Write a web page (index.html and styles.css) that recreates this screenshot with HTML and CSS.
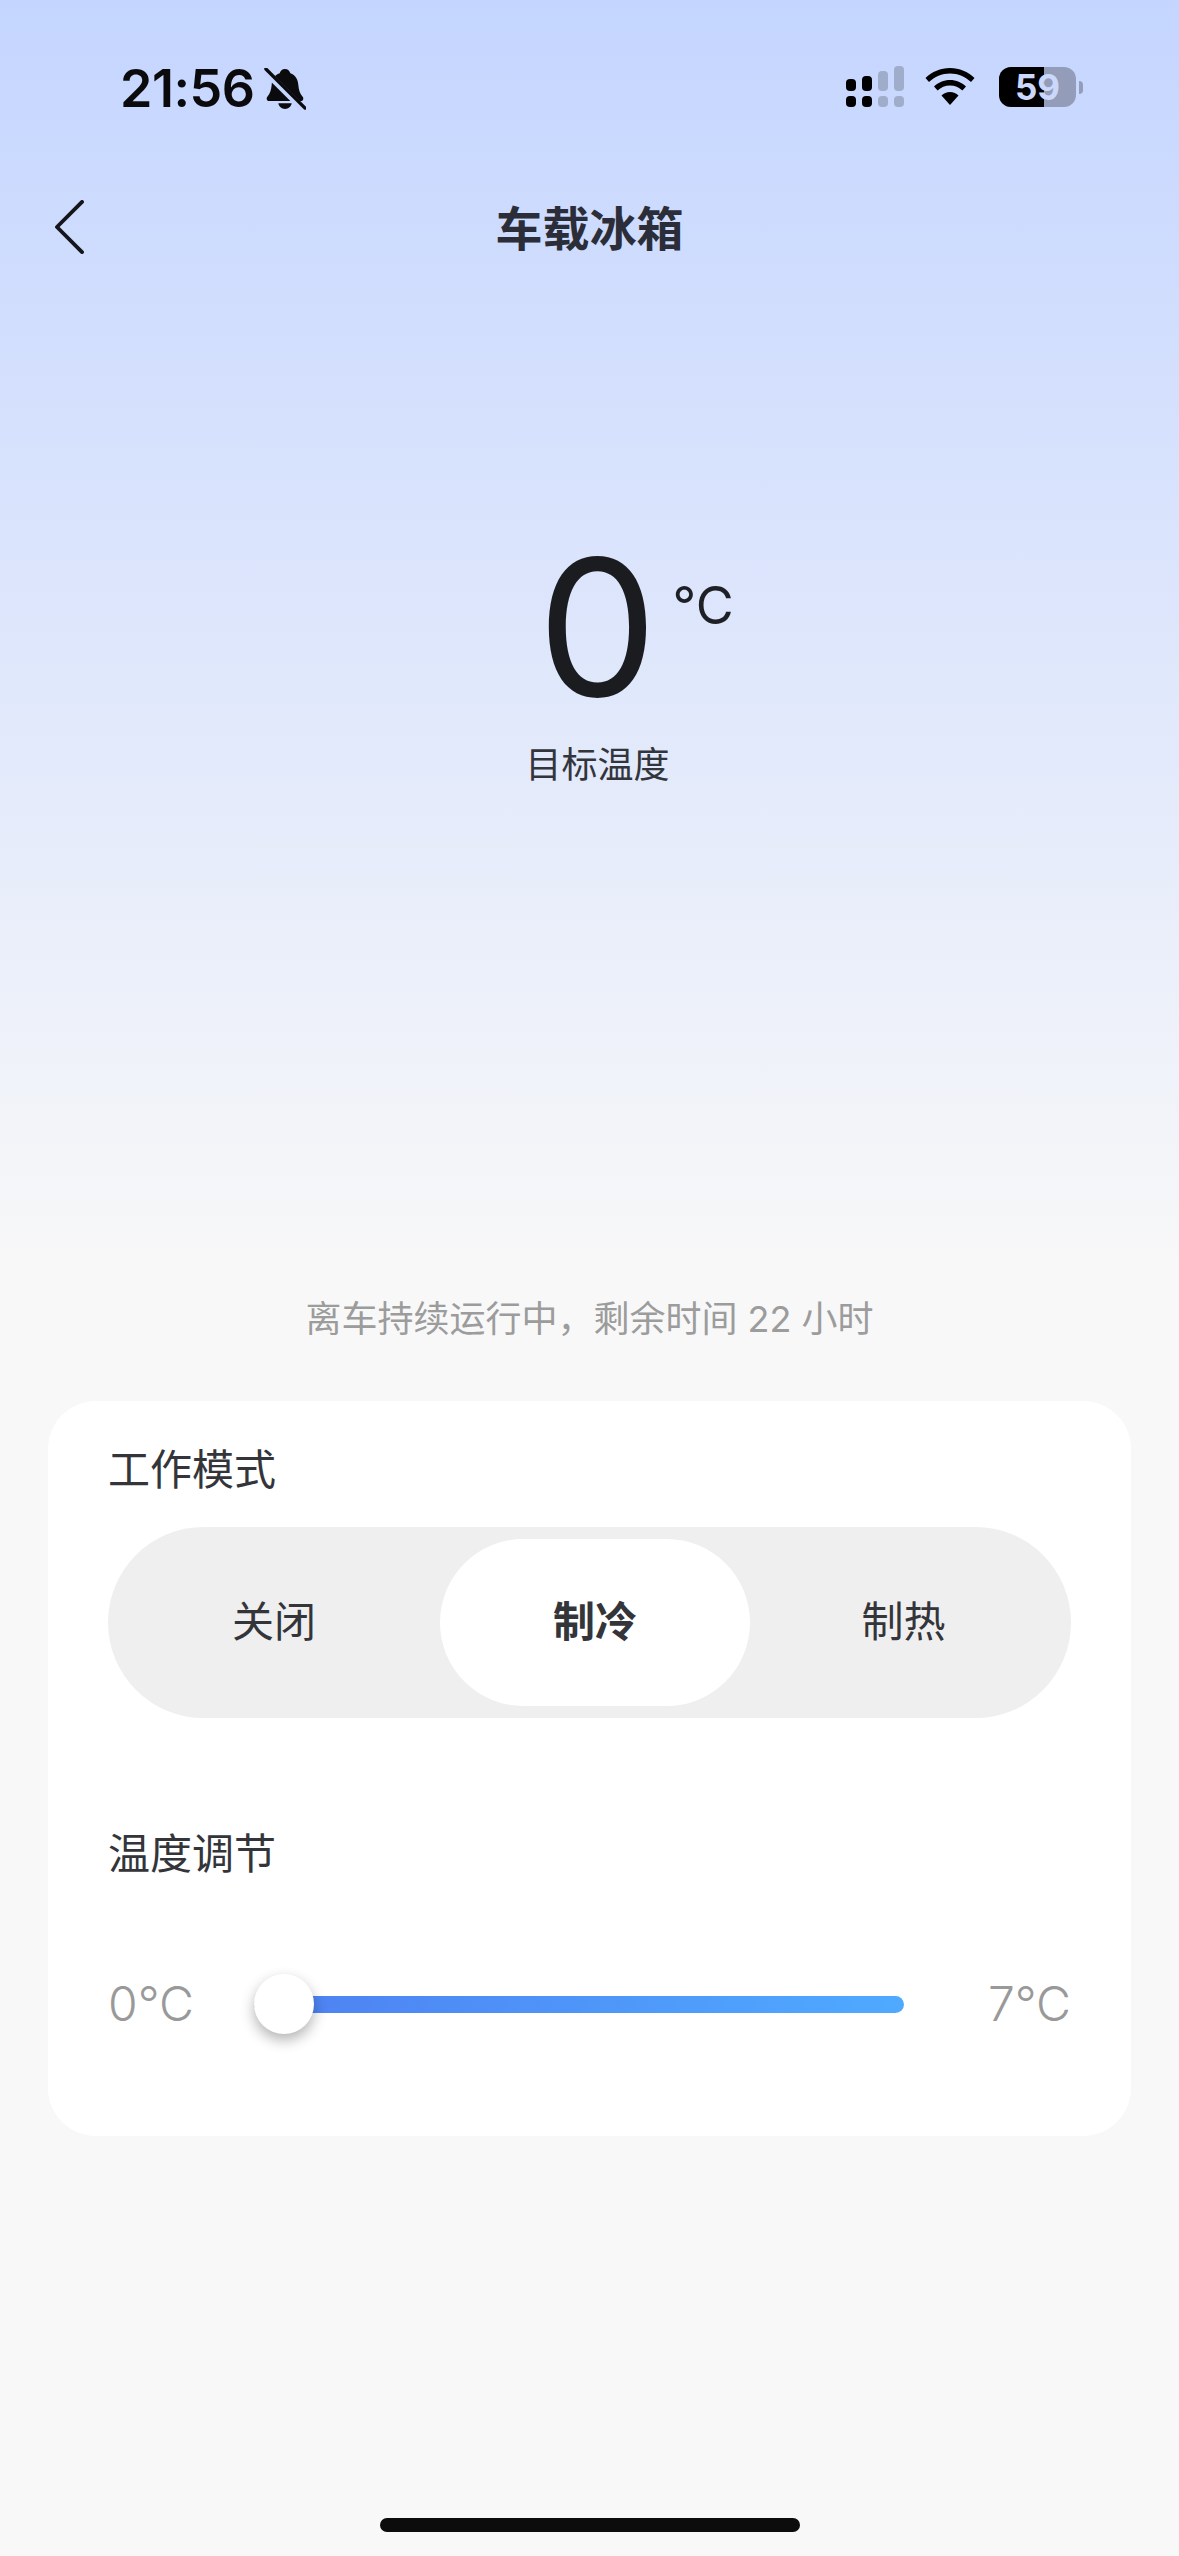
FILE: index.html
```html
<!DOCTYPE html>
<html lang="zh-CN">
<head>
<meta charset="UTF-8">
<meta name="viewport" content="width=device-width, initial-scale=1.0">
<title>车载冰箱</title>
<link rel="stylesheet" href="styles.css">
</head>
<body>
  <div class="phone">
    <div class="statusbar">
      <div class="status-left">
        <span class="time">21:56</span>
        <svg class="bell" viewBox="0 0 44 44">
          <path d="M22 1c3 0 5 2 5.600 4.600C33 7.500 35.500 12 36 18c.4 5 1.500 8.500 4.500 12 1.500 2 .5 4.500-2 4.500H5.500c-2.500 0-3.500-2.500-2-4.500 3-3.500 4-7 4.500-12 .5-6 3-10.500 8.400-12.400C17 3 19 1 22 1z"/>
          <path d="M15 37h14c-.5 3.500-3.500 6-7 6s-6.500-2.500-7-6z"/>
          <path class="bell-gap" d="M1 3l40 40"/>
          <path class="bell-slash" d="M2 1l41 41"/>
        </svg>
      </div>
      <div class="status-right">
        <svg class="signal" viewBox="0 0 60 42">
          <g>
            <rect x="1" y="13" width="10" height="12" rx="4"/>
            <rect x="17" y="10" width="10" height="15" rx="4"/>
            <rect x="1" y="30" width="10" height="11" rx="4"/>
            <rect x="17" y="30" width="10" height="11" rx="4"/>
          </g>
          <g class="signal-off">
            <rect x="33" y="5" width="10" height="20" rx="4"/>
            <rect x="49" y="0" width="10" height="25" rx="4"/>
            <rect x="33" y="30" width="10" height="11" rx="4"/>
            <rect x="49" y="30" width="10" height="11" rx="4"/>
          </g>
        </svg>
        <svg class="wifi" viewBox="0 0 50 38">
          <path d="M25 0C15.500 0 7 3.800 .5 10L4 14c5.500-5.200 13-8.500 21-8.500S40.500 8.800 46 14l3.500-4C43 3.800 34.500 0 25 0z"/>
          <path d="M25 12c-6.200 0-11.800 2.400-16 6.500l3.600 4C15.800 19.400 20.200 17.500 25 17.500s9.200 1.900 12.400 5l3.600-4C36.800 14.400 31.200 12 25 12z"/>
          <path d="M25 24c-3.300 0-6.300 1.300-8.500 3.400L25 37l8.500-9.600C31.300 25.300 28.300 24 25 24z"/>
        </svg>
        <div class="battery">
          <div class="battery-body">
            <div class="battery-fill"></div>
            <span class="battery-num">59</span>
          </div>
          <div class="battery-nub"></div>
        </div>
      </div>
    </div>

    <div class="nav">
      <svg class="back" viewBox="0 0 32 56">
        <path d="M29 2L3 28l26 26"/>
      </svg>
      <h1 class="nav-title">车载冰箱</h1>
    </div>

    <div class="hero">
      <div class="temp">
        <span class="temp-num">0</span>
        <span class="temp-unit">°C</span>
      </div>
      <div class="temp-label">目标温度</div>
    </div>

    <p class="run-note">离车持续运行中，剩余时间 22 小时</p>

    <div class="card">
      <div class="card-title">工作模式</div>
      <div class="modes">
        <div class="mode">关闭</div>
        <div class="mode active">制冷</div>
        <div class="mode last">制热</div>
      </div>

      <div class="card-title temp-title">温度调节</div>
      <div class="slider-row">
        <span class="range-val">0°C</span>
        <div class="slider">
          <div class="track"></div>
          <div class="thumb"></div>
        </div>
        <span class="range-val">7°C</span>
      </div>
    </div>

    <div class="home-bar"></div>
  </div>
</body>
</html>
```

FILE: styles.css
```css
* {
  box-sizing: border-box;
}

body {
  margin: 0;
  background-color: #f8f8f8;
  font-family: Inter, "Noto Sans CJK SC", sans-serif;
}

.phone {
  position: relative;
  width: 1179px;
  height: 2556px;
  overflow: hidden;
  background: linear-gradient(180deg, #c4d5ff 0%, #f8f8f8 50%);
}

/* status bar */
.statusbar {
  height: 170px;
  padding: 66px 96px 0 120px;
  display: flex;
  justify-content: space-between;
  align-items: flex-start;
}

.status-left {
  display: flex;
  align-items: center;
  gap: 10px;
}

.time {
  font-size: 52px;
  line-height: 46px;
  font-weight: 600;
  color: #0b0b0d;
  letter-spacing: -0.5px;
}

.bell {
  width: 42px;
  height: 42px;
  fill: #0b0b0d;
}

.bell-gap {
  fill: none;
  stroke: #c5d5ff;
  stroke-width: 7;
}

.bell-slash {
  fill: none;
  stroke: #0b0b0d;
  stroke-width: 3.500;
  stroke-linecap: round;
}

.status-right {
  display: flex;
  align-items: center;
}

.signal {
  width: 60px;
  height: 42px;
  fill: #000;
}

.signal-off {
  fill: #a0adca;
}

.wifi {
  width: 50px;
  height: 38px;
  margin-left: 20px;
  fill: #000;
}

.battery {
  display: flex;
  align-items: center;
  margin-left: 24px;
}

.battery-body {
  position: relative;
  width: 77px;
  height: 40px;
  border-radius: 12px;
  background: #939db9;
  overflow: hidden;
}

.battery-fill {
  width: 45px;
  height: 100%;
  background: #000;
}

.battery-num {
  position: absolute;
  inset: 0;
  text-align: center;
  font-size: 35px;
  line-height: 40px;
  font-weight: 700;
  color: #ccd8fb;
}

.battery-nub {
  width: 4px;
  height: 13px;
  margin-left: 3px;
  border-radius: 0 4px 4px 0;
  background: #939db9;
}

/* nav */
.nav {
  position: relative;
  height: 120px;
  padding-bottom: 10px;
  display: flex;
  align-items: center;
  justify-content: center;
}

.back {
  position: absolute;
  left: 54px;
  top: 30px;
  width: 31px;
  height: 54px;
  fill: none;
  stroke: #14161c;
  stroke-width: 4;
  stroke-linecap: round;
  stroke-linejoin: round;
}

.nav-title {
  margin: 0;
  font-size: 47px;
  font-weight: 700;
  color: #2b2e38;
}

/* temperature */
.hero {
  padding: 237px 0 0 16px;
  display: flex;
  flex-direction: column;
  align-items: center;
}

.temp {
  position: relative;
  height: 200px;
}

.temp-num {
  font-size: 190px;
  line-height: 200px;
  font-weight: 400;
  color: #1b1c20;
}

.temp-unit {
  position: absolute;
  left: 135px;
  top: 47px;
  font-size: 52px;
  line-height: 64px;
  color: #1f2025;
  white-space: nowrap;
}

.temp-label {
  margin-top: 14px;
  font-size: 36px;
  line-height: 48px;
  color: #33353c;
}

.run-note {
  margin: 506px 0 0;
  text-align: center;
  font-size: 36px;
  line-height: 48px;
  color: #9c9c9c;
}

/* card */
.card {
  margin: 58px 48px 0;
  height: 735px;
  padding: 40px 60px 0;
  border-radius: 48px;
  background: #fff;
}

.card-title {
  font-size: 42px;
  line-height: 58px;
  color: #33353a;
}

.modes {
  margin-top: 28px;
  height: 191px;
  padding: 12px 0;
  display: grid;
  grid-template-columns: 332px 310px 1fr;
  border-radius: 96px;
  background: #efefef;
}

.mode {
  display: flex;
  align-items: center;
  justify-content: center;
  padding-bottom: 8px;
  font-size: 42px;
  color: #33353a;
}

.mode.active {
  border-radius: 84px;
  background: #fff;
  font-weight: 700;
}

.mode.last {
  padding-right: 14px;
}

.temp-title {
  margin-top: 107px;
}

.slider-row {
  margin-top: 91px;
  display: flex;
  align-items: center;
  justify-content: space-between;
}

.range-val {
  font-size: 48px;
  line-height: 60px;
  font-weight: 300;
  color: #999;
}

.slider {
  position: relative;
  width: 650px;
  margin-left: -24px;
  height: 60px;
  display: flex;
  align-items: center;
}

.track {
  width: 100%;
  height: 17px;
  border-radius: 9px;
  background: linear-gradient(90deg, #4e80f2, #4faaff);
}

.thumb {
  position: absolute;
  left: 0;
  top: 0;
  width: 60px;
  height: 60px;
  border-radius: 50%;
  background: #fff;
  box-shadow: 0 6px 14px rgba(0, 0, 0, 0.3);
}

.home-bar {
  position: absolute;
  left: 380px;
  bottom: 24px;
  width: 420px;
  height: 14px;
  border-radius: 7px;
  background: #0c0c0c;
}
```
